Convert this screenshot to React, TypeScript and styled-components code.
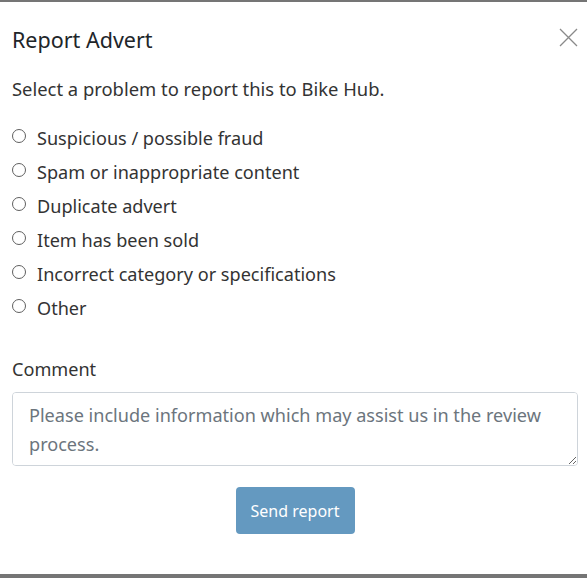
import React from 'react';
import styled, { createGlobalStyle } from 'styled-components';

const GlobalStyle = createGlobalStyle`
  html, body {
    margin: 0;
    padding: 0;
    background: #757575;
  }
  body {
    font-family: "Noto Sans", "Open Sans", Arial, sans-serif;
    color: #212529;
    -webkit-font-smoothing: antialiased;
  }
`;

const Backdrop = styled.div`
  width: 587px;
  height: 578px;
  padding-top: 2px;
  box-sizing: border-box;
  overflow: hidden;
`;

const Modal = styled.div`
  background: #fff;
  height: 572px;
  box-sizing: border-box;
  padding: 0 9px 0 12px;
  display: flex;
  flex-direction: column;
`;

const Header = styled.div`
  display: flex;
  align-items: center;
  justify-content: space-between;
  padding-top: 23px;
`;

const Title = styled.h5`
  margin: 0;
  font-size: 21.5px;
  font-weight: 400;
  line-height: 30px;
  color: #212529;
`;

const CloseButton = styled.button`
  width: 20px;
  height: 20px;
  padding: 0;
  border: 0;
  background: transparent;
  display: flex;
  align-items: center;
  justify-content: center;
  margin-top: -6px;
  cursor: pointer;
`;

const Intro = styled.p`
  margin: 21px 0 0;
  font-size: 18.4px;
  line-height: 26px;
  color: #333;
`;

const Options = styled.div`
  margin-top: 19px;
  display: flex;
  flex-direction: column;
`;

const OptionRow = styled.label`
  display: flex;
  align-items: center;
  height: 34px;
  font-size: 18.1px;
  color: #333;
  cursor: pointer;
`;

const Radio = styled.span`
  width: 12px;
  height: 12px;
  border: 1px solid #5f5f5f;
  border-radius: 50%;
  margin: -5px 11px 0 0;
  flex-shrink: 0;
`;

const FieldLabel = styled.label`
  margin-top: 31px;
  font-size: 18.1px;
  line-height: 26px;
  color: #333;
`;

const TextArea = styled.textarea`
  margin-top: 10px;
  height: 74px;
  box-sizing: border-box;
  width: 100%;
  padding: 8px 16px;
  border: 1px solid #ced4da;
  border-radius: 4px;
  font-family: inherit;
  font-size: 18.1px;
  line-height: 29px;
  color: #495057;
  resize: vertical;
  &::placeholder {
    color: #6c757d;
  }
`;

const Footer = styled.div`
  margin-top: 21px;
  display: flex;
  justify-content: center;
`;

const SendButton = styled.button<{ $disabled?: boolean }>`
  width: 119px;
  height: 47px;
  border: 0;
  border-radius: 4px;
  background: #6499c0;
  color: #fff;
  font-family: inherit;
  font-size: 16px;
  cursor: ${(p) => (p.$disabled ? 'default' : 'pointer')};
`;

const problems = [
  'Suspicious / possible fraud',
  'Spam or inappropriate content',
  'Duplicate advert',
  'Item has been sold',
  'Incorrect category or specifications',
  'Other',
];

const App: React.FC = function () {
  return (
    <>
      <GlobalStyle />
      <Backdrop>
        <Modal>
          <Header>
            <Title>Report Advert</Title>
            <CloseButton aria-label="Close">
              <svg width="19" height="19" viewBox="0 0 19 19">
                <path
                  d="M1 1 L18 18 M18 1 L1 18"
                  stroke="#8a8a8a"
                  strokeWidth="1.3"
                  fill="none"
                />
              </svg>
            </CloseButton>
          </Header>
          <Intro>Select a problem to report this to Bike Hub.</Intro>
          <Options>
            {problems.map((p) => (
              <OptionRow key={p}>
                <Radio />
                {p}
              </OptionRow>
            ))}
          </Options>
          <FieldLabel>Comment</FieldLabel>
          <TextArea placeholder="Please include information which may assist us in the review process." />
          <Footer>
            <SendButton $disabled>Send report</SendButton>
          </Footer>
        </Modal>
      </Backdrop>
    </>
  );
};

export default App;
